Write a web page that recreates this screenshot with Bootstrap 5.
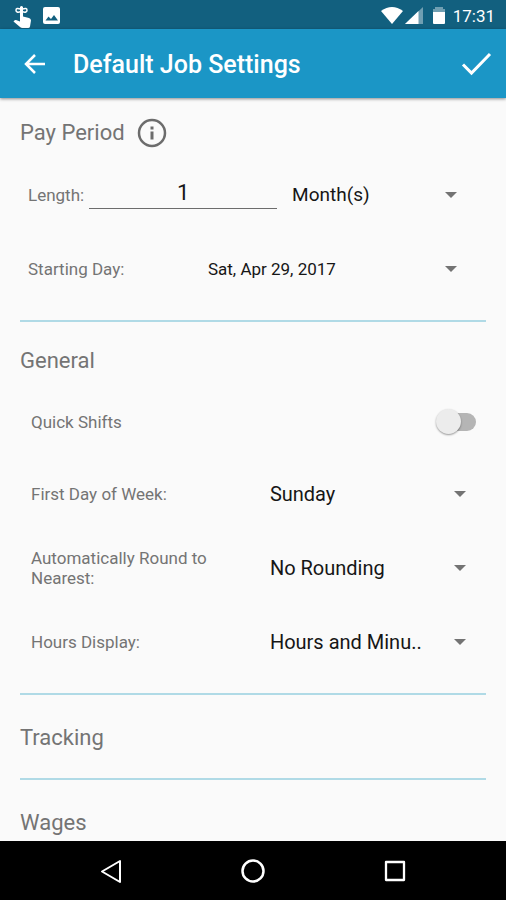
<!DOCTYPE html>
<html lang="en">
<head>
<meta charset="utf-8">
<meta name="viewport" content="width=device-width, initial-scale=1">
<title>Default Job Settings</title>
<link href="https://cdn.jsdelivr.net/npm/bootstrap@5.3.0/dist/css/bootstrap.min.css" rel="stylesheet">
<style>
  body { font-family: Roboto, "Liberation Sans", sans-serif; background: #fafafa; color: #747474; font-size: 17px; line-height: 20px; }
  svg { display: block; flex: none; }
  .status-bar { background: #12607f; height: 29px; font-size: 17px; padding: 2px 11px 0 12px; }
  .app-bar { background: #1b96c6; height: 69px; padding: 0 14px 0 20px; box-shadow: 0 1px 3px rgba(0, 0, 0, .45); z-index: 1; }
  .app-title { font-size: 25px; line-height: 32px; font-weight: 500; margin-left: 23px; padding-top: 2px; }
  .icon-btn { background: none; border: 0; padding: 0; color: inherit; }
  .settings { min-height: 0; padding: 0 20px; }
  .group { padding: 14px 0; border-bottom: 2px solid #b0dae6; }
  .group-first { padding-top: 10px; }
  .group-closed { padding: 18px 0 15px; }
  .group-title { font-size: 22px; line-height: 50px; font-weight: 400; margin: 0; }
  .setting { display: grid; align-items: center; height: 74px; }
  .setting-length { grid-template-columns: auto 12fr 13fr; padding-left: 8px; }
  .setting-date { grid-template-columns: 11fr 17fr; padding-left: 8px; }
  .setting-general { grid-template-columns: 21fr 19fr; padding-left: 11px; }
  .setting-switch { grid-template-columns: 1fr auto; padding: 0 10px 0 11px; height: 71px; }
  .pick {
    border: 0; border-radius: 0; color: #161616; font-size: 20px; line-height: 28px; padding: 0 50px 0 0; min-width: 0;
    background: transparent url("data:image/svg+xml,%3Csvg xmlns='http://www.w3.org/2000/svg' viewBox='0 0 12 6'%3E%3Cpath d='M0 0h12L6 6z' fill='%23737373'/%3E%3C/svg%3E") no-repeat right 29px center / 12px 6px;
  }
  .setting-general .pick { background-position: right 20px center; }
  .setting-length .pick { margin-left: 15px; width: auto; font-size: 19px; }
  .setting-date .pick { font-size: 17px; }
  .amount { border: 0; border-bottom: 1px solid #6c6c6c; border-radius: 0; background: transparent; color: #161616; font-size: 22px; line-height: 22px; height: 28px; padding: 0 0 5px; margin-left: 5px; min-width: 0; width: auto; }
  .toggle { appearance: none; position: relative; width: 38px; height: 18px; border-radius: 9px; background: #b5b5b5; margin: 0; }
  .toggle::before { content: ""; position: absolute; left: -2px; top: -4px; width: 25px; height: 25px; border-radius: 50%; background: #ececec; box-shadow: 0 1px 2px rgba(0, 0, 0, .4); }
  .toggle:checked::before { left: 16px; background: #1b96c6; }
  .nav-keys { height: 59px; padding: 0 40px; }
</style>
<script src="https://cdn.jsdelivr.net/npm/bootstrap@5.3.0/dist/js/bootstrap.bundle.min.js"></script>
</head>
<body>
<div class="vh-100 d-flex flex-column overflow-hidden">
  <div class="status-bar d-flex align-items-center text-white flex-shrink-0">
    <svg width="21" height="24" viewBox="0 1 21 24" fill="#fff"><path d="M8 4Q9.500 2 11 4V13.500L17 15Q19 15.500 19 17.500L18 23.500Q17.700 25 16 25H10.500Q9 25 8 24L1.500 18.500Q2.500 16.500 4 17L8 18.500Z"/><path d="M8.500 6Q4 4.500 4 7.200Q4 10 8.500 8.800M10.500 6Q15 4.500 15 7.200Q15 10 10.500 8.800" fill="none" stroke="#fff" stroke-width="1.500"/></svg>
    <svg class="ms-2" width="20" height="20" viewBox="0 1 20 20"><rect x="2" y="2" width="17" height="17" rx="2" fill="#fff"/><path d="M4.500 15.500l3-4 2.500 2.500 3-4 4 5.500z" fill="#12607f"/></svg>
    <svg class="ms-auto" width="52" height="20" viewBox="0 1 52 20" fill="#fff"><path d="M0 6Q11 -2 22 6L11 19z"/><path d="M24 19L42 2V19z" opacity=".4"/><path d="M24 19L37.500 6V19z"/></svg>
    <svg width="12" height="20" viewBox="0 1 12 20" fill="#fff"><path d="M2 2h8v2h2v3H0V4h2z" opacity=".4"/><path d="M0 7h12v11q0 1-1 1H1q-1 0-1-1z"/></svg>
    <span class="ms-2">17:31</span>
  </div>
  <header class="app-bar d-flex align-items-center text-white flex-shrink-0 position-relative">
    <button class="icon-btn" type="button" aria-label="Back"><svg width="30" height="30" viewBox="0 0 30 30" fill="none" stroke="#fff" stroke-width="2.500"><path d="M25 15H6M15 6L6 15l9 9"/></svg></button>
    <h1 class="app-title mb-0">Default Job Settings</h1>
    <button class="icon-btn ms-auto" type="button" aria-label="Save"><svg width="32" height="30" viewBox="0 0 32 30" fill="none" stroke="#fff" stroke-width="3"><path d="M3 15.500l8.500 8.500L30 5"/></svg></button>
  </header>
  <main class="settings flex-grow-1 overflow-hidden">
    <section class="group group-first">
      <div class="d-flex align-items-center">
        <h2 class="group-title">Pay Period</h2>
        <button class="icon-btn ms-2 ps-1" type="button" aria-label="About pay period"><svg width="30" height="30" viewBox="0 0 30 30"><circle cx="15" cy="15" r="13" fill="none" stroke="#6c6c6c" stroke-width="2.500"/><path d="M13.500 8.500h3v3h-3zM13.500 13.500h3v8h-3z" fill="#6c6c6c"/></svg></button>
      </div>
      <div class="setting setting-length">
        <label for="length">Length:</label>
        <input class="form-control amount text-center" id="length" type="text" inputmode="numeric" value="1">
        <select class="form-select pick" aria-label="Length unit"><option>Month(s)</option></select>
      </div>
      <div class="setting setting-date">
        <label for="start">Starting Day:</label>
        <select class="form-select pick" id="start"><option>Sat, Apr 29, 2017</option></select>
      </div>
    </section>
    <section class="group">
      <h2 class="group-title">General</h2>
      <div class="setting setting-switch">
        <label for="quick">Quick Shifts</label>
        <input class="toggle" id="quick" type="checkbox" role="switch">
      </div>
      <div class="setting setting-general">
        <label for="week">First Day of Week:</label>
        <select class="form-select pick" id="week"><option>Sunday</option></select>
      </div>
      <div class="setting setting-general">
        <label for="round" class="pe-5">Automatically Round to Nearest:</label>
        <select class="form-select pick" id="round"><option>No Rounding</option></select>
      </div>
      <div class="setting setting-general">
        <label for="hours">Hours Display:</label>
        <select class="form-select pick" id="hours"><option>Hours and Minu..</option></select>
      </div>
    </section>
    <section class="group group-closed"><h2 class="group-title">Tracking</h2></section>
    <section class="group group-closed"><h2 class="group-title">Wages</h2></section>
  </main>
  <nav class="nav-keys bg-black d-flex justify-content-around align-items-center flex-shrink-0" aria-label="System">
    <button class="icon-btn" type="button" aria-label="Back"><svg width="26" height="26" viewBox="0 0 26 26" fill="none" stroke="#fff" stroke-width="2" stroke-linejoin="round"><path d="M22 3v21L4 13.500z"/></svg></button>
    <button class="icon-btn" type="button" aria-label="Home"><svg width="26" height="26" viewBox="0 0 26 26" fill="none" stroke="#fff" stroke-width="2.500"><circle cx="13" cy="13" r="10.500"/></svg></button>
    <button class="icon-btn" type="button" aria-label="Recent apps"><svg width="26" height="26" viewBox="0 0 26 26" fill="none" stroke="#fff" stroke-width="2.300" stroke-linejoin="round"><path d="M4 4h18v18H4z"/></svg></button>
  </nav>
</div>
</body>
</html>
